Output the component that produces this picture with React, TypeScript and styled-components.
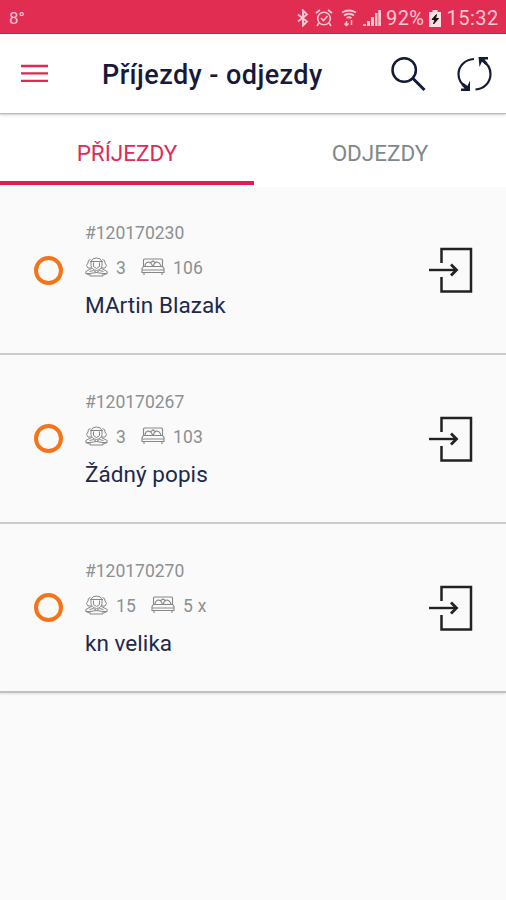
import React from "react";
import styled, { createGlobalStyle } from "styled-components";

const Global = createGlobalStyle`
  * { box-sizing: border-box; }
  body { margin: 0; background: #fafafa; font-family: Roboto, sans-serif; }
`;

const Screen = styled.div`
  width: 506px;
  height: 900px;
  overflow: hidden;
  background: #fafafa;
`;

const StatusBar = styled.div`
  height: 34px;
  display: flex;
  align-items: center;
  justify-content: space-between;
  padding: 3px 5px 0 9px;
  background: #e22d52;
  border-bottom: 1px solid #d90f40;
  color: #fbc8d2;
`;

const Temperature = styled.span`
  font-size: 17px;
  line-height: 20px;
`;

const StatusGroup = styled.div`
  display: flex;
  align-items: center;
  svg { display: block; flex: none; }
`;

const StatusText = styled.span<{ $width: number; $spacing: number }>`
  width: ${(p) => p.$width}px;
  font-size: 20px;
  line-height: 22px;
  letter-spacing: ${(p) => p.$spacing}px;
  white-space: nowrap;
`;

const StatusIcons = styled.div`
  display: grid;
  grid-template-columns: 12px 18px 16px 18px;
  column-gap: 6px;
  margin-right: 7px;
  svg:nth-child(3) { margin-left: 2px; }
  svg:nth-child(4) { margin-left: 2px; }
`;

const Header = styled.header`
  position: relative;
  height: 79px;
  display: flex;
  align-items: center;
  padding: 0 14px 0 21px;
  background: #fff;
  box-shadow: 0 1px 1px #b9b9b9, 0 2px 3px #d4d4d4;
`;

const IconButton = styled.button<{ $gap?: number }>`
  border: 0;
  padding: 0;
  margin: 0 0 0 ${(p) => p.$gap ?? 0}px;
  background: none;
  display: flex;
  svg { display: block; }
`;

const Title = styled.h1`
  flex: 1;
  margin: 2px 0 0 54px;
  font-size: 27px;
  line-height: 32px;
  font-weight: 500;
  letter-spacing: 0.42px;
  color: #17193b;
  white-space: nowrap;
`;

const Tabs = styled.nav`
  height: 74px;
  display: grid;
  grid-template-columns: 254px 252px;
  background: #fff;
`;

const Tab = styled.button<{ $active?: boolean }>`
  height: 72px;
  border: 0;
  border-bottom: 4px solid ${(p) => (p.$active ? "#e21b50" : "transparent")};
  padding: 12px 0 0;
  background: none;
  font: 400 22.5px/26px Roboto, sans-serif;
  color: ${(p) => (p.$active ? "#dc2c58" : "#7f888b")};
`;

const List = styled.ul`
  margin: 0;
  padding: 0;
  list-style: none;
`;

const Row = styled.li`
  height: 169px;
  display: flex;
  align-items: center;
  padding: 0 33px 0 34px;
  border-bottom: 2px solid #cbcbcb;
  &:first-child { height: 168px; }
  &:last-child { box-shadow: 0 1px 2px #dedede; border-color: #c0c0c0; }
`;

const StatusRing = styled.span`
  width: 29px;
  height: 29px;
  flex: none;
  border: 4px solid #f5731b;
  border-radius: 50%;
`;

const Details = styled.div`
  flex: 1;
  margin-left: 22px;
`;

const Code = styled.div`
  font-size: 17.5px;
  line-height: 24px;
  color: #8c9092;
`;

const Meta = styled.div`
  height: 24px;
  margin-top: 11px;
  display: flex;
  align-items: center;
  font-size: 17.5px;
  color: #8c9092;
  svg { display: block; flex: none; margin-bottom: 2px; }
`;

const Count = styled.span`
  margin: 0 15px 0 8px;
  letter-spacing: 0.2px;
`;

const Name = styled.div`
  margin-top: 11px;
  font-size: 22.5px;
  line-height: 28px;
  letter-spacing: 0.05px;
  color: #20294c;
`;

const Bluetooth = () => (
  <svg width="12" height="18" viewBox="0 0 12 18" fill="none" stroke="currentColor" strokeWidth="1.9">
    <path d="M1 5.500l9 7-4 4V1.500l4 4-9 7" />
  </svg>
);

const Alarm = () => (
  <svg width="18" height="18" viewBox="0 0 18 18" fill="none" stroke="currentColor" strokeWidth="1.6">
    <circle cx="9" cy="9.5" r="6.3" />
    <path d="M1 4l4-3M17 4l-4-3M4 14l-2 3M14 14l2 3M6 9l2.5 2.5L12.5 7" />
  </svg>
);

const Wifi = () => (
  <svg width="16" height="18" viewBox="0 0 16 18" fill="none" stroke="currentColor" strokeWidth="1.8">
    <path d="M1 3.500q7-4 14 0M3 6.500q5-3.500 10 0M5.500 9q2.500-1.500 5 0" />
    <path d="M5.500 12v5M3.500 14.500l2 2 2-2M10.500 16v-5" strokeWidth="1.5" />
  </svg>
);

const Signal = () => (
  <svg width="18" height="18" viewBox="0 0 18 18" fill="currentColor">
    <path d="M0 15h3v2H0zM4 12h3v5H4zM8 8h3v9H8zM12 4h2.5v13H12zM15.300 1H18v16h-2.700z" />
  </svg>
);

const Battery = () => (
  <svg width="12" height="17" viewBox="0 0 12 17">
    <path d="M3.5 0h5v2H12v15H0V2h3.500z" fill="#fbdce2" />
    <path d="M7.500 4.500L3 9.500h3l-1.500 4.500L9.500 8.500H6.500z" fill="#171014" stroke="#171014" />
  </svg>
);

const Menu = () => (
  <svg width="27" height="19" viewBox="0 0 27 19" fill="#e22751">
    <path d="M0 .8h27v2.4H0zM0 8.2h27v2.4H0zM0 15.7h27v2.4H0z" />
  </svg>
);

const Search = () => (
  <svg width="36" height="36" viewBox="0 0 36 36" fill="none" stroke="#151a35">
    <circle cx="14.2" cy="14" r="11.7" strokeWidth="2.5" />
    <path d="M22.500 22l12 12" strokeWidth="3" />
  </svg>
);

const Sync = () => (
  <svg width="36" height="36" viewBox="0 0 36 36" fill="none" stroke="#151a35" strokeWidth="2.2">
    <path d="M18 3C9 3.500 2.500 10 2.500 18c0 6 3 10.500 8 13.500M19.500 33.500C28 33 34.500 26.500 34.500 18c0-5.500-2.500-10-8-13.500" />
    <path d="M22.500 1H32v2.500h-3.500l3 3.500-2 2-3.500-3.500L23.500 11zM14 24.500V35H5v-2.500h3.500L5.500 29l2-2 4 3z" fill="#151a35" stroke="none" />
  </svg>
);

const Guest = () => (
  <svg width="23" height="20" viewBox="0 0 23 20" fill="none" stroke="#858788" strokeWidth="1">
    <path d="M6 4.500Q7 1 11.500 1T17 4.500v4q-.5 4-5.500 5-5-1-5.500-5zM5 4.500h13M8.500 5.500v4l3 2 3-2v-4M5.500 2.500Q2.500 3 3 6L1.500 8.500 3 11h4M17.500 2.500q3 .5 2.500 3.500l1.500 2.500L20 11h-4" />
    <path d="M6.500 11.500L.8 14.500v2l3.700 1.500M16.500 11.500l5.700 3v2l-3.700 1.500M4.500 14.500l4-1 3 2 3-2 4 1M5 16.500v2.500h13v-2.500l-6.500-1zM1 16.500h4M18 16.500h4" />
  </svg>
);

const Bed = () => (
  <svg width="24" height="18" viewBox="0 0 24 18" fill="none" stroke="#858788" strokeWidth="1.1">
    <path d="M2.500 9V2q0-1 1-1h17q1 0 1 1v7M4 8q0-3 3-4 3 0 4.500 4M12.500 8q0-3 3-4 3 0 4.500 4M9 5l3-2 3 2" />
    <path d="M2.500 8.500h19l1.500 2v4H1v-4zM1 12h22M3 14.500V17M21 14.500V17" />
  </svg>
);

const Enter = () => (
  <svg width="44" height="46" viewBox="0 0 44 46" fill="none" stroke="#222224">
    <path d="M12.500 16V2H42v42.500H12.500V30" strokeWidth="2.500" />
    <path d="M0 23h27" strokeWidth="2.400" />
    <path d="M22 17.500l5.500 5.500-5.500 5.500" strokeWidth="2.800" />
  </svg>
);

const reservations = [
  { code: "#120170230", guests: "3", room: "106", name: "MArtin Blazak" },
  { code: "#120170267", guests: "3", room: "103", name: "Žádný popis" },
  { code: "#120170270", guests: "15", room: "5 x", name: "kn velika" },
];

export default function App() {
  return (
    <Screen>
      <Global />
      <StatusBar>
        <Temperature>8°</Temperature>
        <StatusGroup>
          <StatusIcons>
            <Bluetooth />
            <Alarm />
            <Wifi />
            <Signal />
          </StatusIcons>
          <StatusText $width={43} $spacing={0.4}>92%</StatusText>
          <Battery />
          <StatusText $width={60} $spacing={0.5}>&nbsp;15:32</StatusText>
        </StatusGroup>
      </StatusBar>
      <Header>
        <IconButton aria-label="Menu"><Menu /></IconButton>
        <Title>Příjezdy - odjezdy</Title>
        <IconButton aria-label="Hledat"><Search /></IconButton>
        <IconButton aria-label="Obnovit" $gap={30}><Sync /></IconButton>
      </Header>
      <Tabs>
        <Tab $active>PŘÍJEZDY</Tab>
        <Tab>ODJEZDY</Tab>
      </Tabs>
      <List>
        {reservations.map((r) => (
          <Row key={r.code}>
            <StatusRing />
            <Details>
              <Code>{r.code}</Code>
              <Meta>
                <Guest />
                <Count>{r.guests}</Count>
                <Bed />
                <Count>{r.room}</Count>
              </Meta>
              <Name>{r.name}</Name>
            </Details>
            <Enter />
          </Row>
        ))}
      </List>
    </Screen>
  );
}
